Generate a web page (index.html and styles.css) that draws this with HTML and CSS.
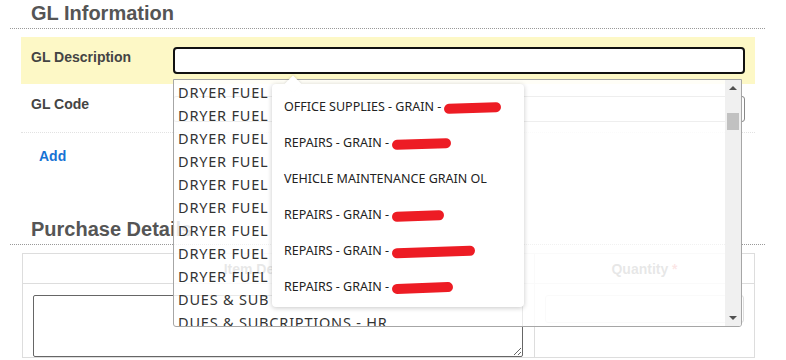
FILE: index.html
```html
<!DOCTYPE html>
<html lang="en">
<head>
  <meta charset="UTF-8" />
  <title>GL Information</title>
  <link rel="stylesheet" href="styles.css">
</head>
<body>

  <div class="page">
    <h2 class="section-title">GL Information</h2>

    <div class="form-area">
      <div class="form-row highlight">
        <label>GL Description</label>
        <div class="field"><input type="text" class="gl-input focused"></div>
      </div>
      <div class="form-row">
        <label>GL Code</label>
        <div class="field"><input type="text" class="gl-input code"></div>
      </div>
      <div class="add-row"><a href="#" class="add-link">Add</a></div>
    </div>

    <h2 class="section-title purchase">Purchase Details</h2>

    <table class="purchase-table">
      <thead>
        <tr>
          <th class="col-desc">Item Description</th>
          <th class="col-qty">Quantity <span class="req">*</span></th>
        </tr>
      </thead>
      <tbody>
        <tr>
          <td><textarea class="desc-box"></textarea></td>
          <td><input type="text" class="qty-input"></td>
        </tr>
      </tbody>
    </table>
  </div>

  <!-- native datalist dropdown -->
  <div class="datalist">
    <ul class="datalist-items">
      <li>DRYER FUEL - GRAIN</li>
      <li>DRYER FUEL - GRAIN</li>
      <li>DRYER FUEL - GRAIN</li>
      <li>DRYER FUEL - GRAIN</li>
      <li>DRYER FUEL - GRAIN</li>
      <li>DRYER FUEL - GRAIN</li>
      <li>DRYER FUEL - GRAIN</li>
      <li>DRYER FUEL - GRAIN</li>
      <li>DRYER FUEL - GRAIN</li>
      <li>DUES &amp; SUB - GRAIN</li>
      <li>DUES &amp; SUBCRIPTIONS - HR</li>
    </ul>
    <div class="scrollbar">
      <span class="arrow up"></span>
      <span class="thumb"></span>
      <span class="arrow down"></span>
    </div>
  </div>

  <!-- suggestion popup -->
  <div class="suggest">
    <span class="suggest-tip"></span>
    <ul class="suggest-items">
      <li>OFFICE SUPPLIES - GRAIN - <span class="redact w57"></span></li>
      <li>REPAIRS - GRAIN - <span class="redact w59"></span></li>
      <li>VEHICLE MAINTENANCE GRAIN OL</li>
      <li>REPAIRS - GRAIN - <span class="redact w52"></span></li>
      <li>REPAIRS - GRAIN - <span class="redact w83"></span></li>
      <li>REPAIRS - GRAIN - <span class="redact w61"></span></li>
    </ul>
  </div>

</body>
</html>
```

FILE: styles.css
```css
body {
  margin: 0;
  font-family: "Liberation Sans", Arial, sans-serif;
  color: #555;
  background: #fff;
}

.page {
  padding: 0 21px 0 10px;
}

.section-title {
  margin: 0;
  padding: 1px 0 3px 21px;
  font-size: 20px;
  line-height: 24px;
  font-weight: bold;
  color: #555;
  border-bottom: 1px dotted #999;
}

.section-title.purchase {
  margin-top: 50px;
}

.form-area {
  margin: 8px 0 0 11px;
  width: 734px;
}

.form-row {
  display: flex;
  align-items: flex-start;
  padding: 10px 10px;
  border-bottom: 1px dotted #e2e2e2;
}

.form-row.highlight {
  background: #fdf8c6;
  border-bottom: none;
}

.form-row label {
  width: 142px;
  font-size: 14px;
  line-height: 20px;
  font-weight: bold;
  color: #444;
}

.field {
  flex: 1;
}

.gl-input {
  display: block;
  box-sizing: border-box;
  width: 100%;
  height: 27px;
  border: 1px solid #ccc;
  border-radius: 3px;
  outline: none;
  background: #fff;
}

.gl-input.focused {
  border: 2px solid #111;
  border-radius: 4px;
}

.gl-input.code {
  height: 26px;
  margin-top: 2px;
  border-color: #888;
}

.add-row {
  padding: 13px 0 0 18px;
}

.add-link {
  font-size: 14px;
  line-height: 20px;
  font-weight: bold;
  color: #1672d4;
  text-decoration: none;
}

.purchase-table {
  margin: 8px 0 0 12px;
  width: 733px;
  border-collapse: collapse;
  border: 1px solid #ddd;
}

.purchase-table th {
  height: 29px;
  padding: 0;
  font-size: 14px;
  font-weight: bold;
  color: #555;
  text-align: center;
  border-bottom: 1px solid #ddd;
}

.col-desc {
  width: 511px;
  border-right: 1px solid #ddd;
}

.req {
  color: #e05050;
}

.purchase-table td {
  padding: 11px 10px 0;
  vertical-align: top;
}

.purchase-table td:first-child {
  border-right: 1px solid #ddd;
}

.desc-box {
  display: block;
  box-sizing: border-box;
  width: 490px;
  height: 62px;
  border: 1px solid #666;
  border-radius: 2px;
  resize: vertical;
}

.qty-input {
  display: block;
  box-sizing: border-box;
  width: 199px;
  height: 28px;
  border: 1px solid #ddd;
  border-radius: 3px;
}

/* dropdown list */
.datalist {
  position: absolute;
  left: 173px;
  top: 79px;
  width: 569px;
  height: 248px;
  box-sizing: border-box;
  border: 1px solid #a6a6a6;
  border-radius: 0 0 3px 3px;
  background: rgba(255, 255, 255, 0.86);
  overflow: hidden;
}

.datalist-items {
  list-style: none;
  margin: 0;
  padding: 1px 0 0 4px;
  font-family: "Noto Sans", sans-serif;
  font-size: 14.5px;
  letter-spacing: 0.8px;
  color: #333;
}

.datalist-items li {
  height: 23px;
  line-height: 23px;
  white-space: nowrap;
}

.scrollbar {
  position: absolute;
  top: 0;
  right: 0;
  width: 16px;
  height: 100%;
  background: #f0f0f0;
}

.scrollbar .arrow {
  position: absolute;
  left: 4px;
  width: 0;
  height: 0;
  border-left: 4px solid transparent;
  border-right: 4px solid transparent;
}

.scrollbar .arrow.up {
  top: 6px;
  border-bottom: 4px solid #505050;
}

.scrollbar .arrow.down {
  bottom: 6px;
  border-top: 4px solid #505050;
}

.scrollbar .thumb {
  position: absolute;
  top: 33px;
  left: 2px;
  width: 12px;
  height: 17px;
  background: #c1c1c1;
}

/* suggestion popup */
.suggest {
  position: absolute;
  left: 272px;
  top: 84px;
  width: 252px;
  height: 223px;
  background: #fff;
  border-radius: 4px;
  box-shadow: 0 1px 5px rgba(0, 0, 0, 0.22);
}

.suggest-tip {
  position: absolute;
  left: 15px;
  top: -6px;
  width: 12px;
  height: 12px;
  background: #fff;
  transform: rotate(45deg);
  box-shadow: -1px -1px 2px rgba(0, 0, 0, 0.08);
}

.suggest-items {
  position: relative;
  list-style: none;
  margin: 0;
  padding: 5px 0 0 12px;
  font-family: "Noto Sans", sans-serif;
  font-size: 12.5px;
  color: #222;
}

.suggest-items li {
  height: 36px;
  line-height: 36px;
  white-space: nowrap;
}

.redact {
  display: inline-block;
  height: 10px;
  vertical-align: middle;
  background: #ed1c24;
  border-radius: 6px;
  transform: rotate(-2deg);
}

.w52 { width: 52px; }
.w57 { width: 57px; }
.w59 { width: 59px; }
.w61 { width: 61px; }
.w83 { width: 83px; }
```
